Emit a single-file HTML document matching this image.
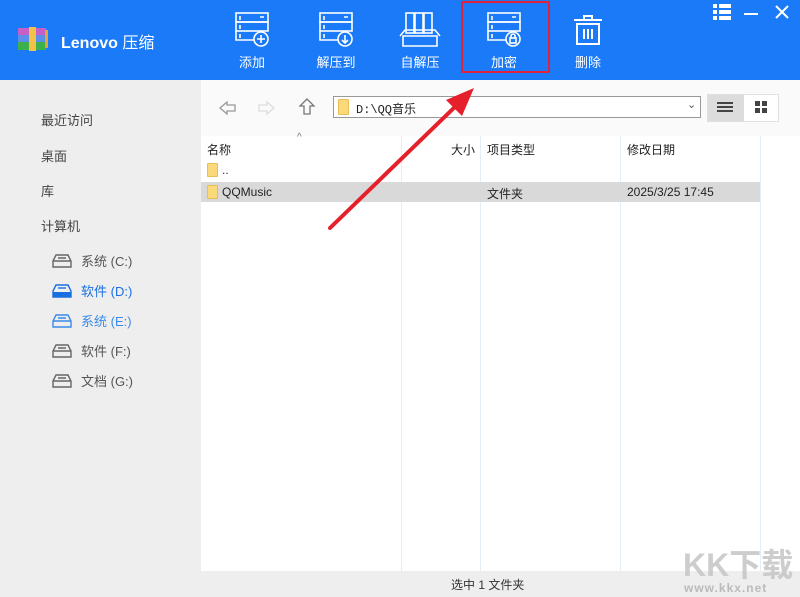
<!DOCTYPE html>
<html><head><meta charset="utf-8"><style>
*{margin:0;padding:0;box-sizing:border-box}
body{width:800px;height:597px;overflow:hidden;font-family:"Liberation Sans","Noto Sans CJK SC",sans-serif;font-size:13px;color:#333;position:relative;background:#fff}
.hdr{position:absolute;left:0;top:0;width:800px;height:80px;background:#1a7af8}
.abs{position:absolute}
.tb{position:absolute;top:10px;width:60px;text-align:center;color:#fff;font-size:13px}
.tb svg{display:block;margin:0 auto 4px}
.side{position:absolute;left:0;top:80px;width:201px;height:517px;background:#eeeeee}
.side div{position:absolute;font-size:13px;color:#444}
.main{position:absolute;left:201px;top:80px;width:599px;height:491px;background:#fff}
.nav{position:absolute;left:201px;top:80px;width:599px;height:56px;background:#fafafa}
.col{position:absolute;top:136px;width:1px;height:435px;background:#e4eef7}
.status{position:absolute;left:201px;top:571px;width:599px;height:26px;background:#eeeeee}
.fold{position:absolute;width:11px;height:14px;background:#fbd97a;border:1px solid #e8be55;border-radius:1px}
</style></head><body>
<div class="hdr"></div>
<svg class="abs" style="left:17px;top:25px" width="32" height="28" viewBox="0 0 32 28">
<rect x="1" y="3" width="28" height="7" fill="#c65fc6"/><rect x="1" y="10" width="28" height="7" fill="#5a8ee8"/><rect x="1" y="17" width="28" height="8" fill="#3cb04a"/>
<rect x="12" y="2" width="7" height="24" fill="#f1c14a"/><rect x="28" y="5" width="3" height="18" fill="#e2a43b"/></svg>
<div class="abs" style="left:61px;top:29px;color:#fff;font-size:16px;font-weight:bold">Lenovo <span style="font-weight:normal">压缩</span></div>
<div class="tb" style="left:222px"><svg width="40" height="38" viewBox="0 0 40 38" fill="none" stroke="#fff" stroke-width="1.6"><rect x="4" y="3" width="32" height="9"/><rect x="4" y="12" width="32" height="9"/><path d="M4 21v9h18"/><path d="M8 6v4M8 15v4M8 24v4M28 7h4"/><circle cx="29" cy="29" r="7" fill="#1a7af8"/><path d="M29 25v8M25 29h8"/></svg>添加</div>
<div class="tb" style="left:306px"><svg width="40" height="38" viewBox="0 0 40 38" fill="none" stroke="#fff" stroke-width="1.6"><rect x="4" y="3" width="32" height="9"/><rect x="4" y="12" width="32" height="9"/><path d="M4 21v9h18"/><path d="M8 6v4M8 15v4M8 24v4M28 7h4"/><circle cx="29" cy="29" r="7" fill="#1a7af8"/><path d="M29 25v8M26 30l3 3 3-3"/></svg>解压到</div>
<div class="tb" style="left:390px"><svg width="44" height="38" viewBox="0 0 44 38" fill="none" stroke="#fff" stroke-width="1.6"><rect x="8" y="3" width="8" height="20"/><rect x="17" y="3" width="8" height="20"/><rect x="26" y="3" width="8" height="20"/><path d="M2 26l5-6h30l5 6M5 26h34v10H5z"/></svg>自解压</div>
<div class="abs" style="left:461px;top:1px;width:89px;height:72px;border:2px solid #e0223a"></div>
<div class="tb" style="left:474px"><svg width="40" height="38" viewBox="0 0 40 38" fill="none" stroke="#fff" stroke-width="1.6"><rect x="4" y="3" width="32" height="9"/><rect x="4" y="12" width="32" height="9"/><path d="M4 21v9h18"/><path d="M8 6v4M8 15v4M8 24v4M28 7h4"/><circle cx="29" cy="29" r="7" fill="#1a7af8"/><rect x="26" y="28" width="6" height="5"/><path d="M27 28v-2a2 2 0 0 1 4 0v2"/></svg>加密</div>
<div class="tb" style="left:558px"><svg width="40" height="38" viewBox="0 0 40 38" fill="none" stroke="#fff" stroke-width="2"><path d="M6 10h28M16 10V6h8v4"/><rect x="9" y="14" width="22" height="20"/><path d="M16 19v10M20 19v10M24 19v10"/></svg>删除</div>
<svg class="abs" style="left:713px;top:4px" width="18" height="16" viewBox="0 0 18 16" fill="#fff"><rect x="0" y="0" width="4" height="4"/><rect x="6" y="0" width="12" height="4"/><rect x="0" y="6" width="4" height="4"/><rect x="6" y="6" width="12" height="4"/><rect x="0" y="12" width="4" height="4"/><rect x="6" y="12" width="12" height="4"/></svg>
<div class="abs" style="left:744px;top:13px;width:14px;height:2px;background:#fff"></div>
<svg class="abs" style="left:775px;top:5px" width="14" height="14" viewBox="0 0 14 14" stroke="#fff" stroke-width="2"><path d="M1 1l12 12M13 1L1 13"/></svg>
<div class="side">
<div style="left:41px;top:30px">最近访问</div>
<div style="left:41px;top:66px">桌面</div>
<div style="left:41px;top:101px">库</div>
<div style="left:41px;top:136px">计算机</div>
<div style="left:81px;top:171px;color:#555">系统 (C:)</div>
<div style="left:81px;top:201px;color:#1a6fe0">软件 (D:)</div>
<div style="left:81px;top:231px;color:#3a8ae6">系统 (E:)</div>
<div style="left:81px;top:261px;color:#555">软件 (F:)</div>
<div style="left:81px;top:291px;color:#555">文档 (G:)</div>
</div>
<svg class="abs" style="left:52px;top:253px" width="20" height="140" viewBox="0 0 20 140" fill="none" stroke-width="1.4">
<g stroke="#666"><path d="M4 2h12l3 6v6H1V8z M1 8h18M6 5h8M6 8h8"/></g>
<g transform="translate(0,30)"><path d="M4 2h12l3 6v6H1V8z" stroke="#1a6fe0" fill="none"/><rect x="1" y="9" width="18" height="5" fill="#1a6fe0"/><path d="M6 5h8" stroke="#1a6fe0"/></g>
<g transform="translate(0,60)" stroke="#3a8ae6"><path d="M4 2h12l3 6v6H1V8z M1 8h18M6 5h8M6 8h8"/></g>
<g transform="translate(0,90)" stroke="#666"><path d="M4 2h12l3 6v6H1V8z M1 8h18M6 5h8M6 8h8"/></g>
<g transform="translate(0,120)" stroke="#666"><path d="M4 2h12l3 6v6H1V8z M1 8h18M6 5h8M6 8h8"/></g>
</svg>
<div class="main"></div>
<div class="nav"></div>
<svg class="abs" style="left:219px;top:100px" width="18" height="16" viewBox="0 0 18 16" fill="none" stroke="#999" stroke-width="1.3"><path d="M1 8l7-6v3h8v6H8v3z"/></svg>
<svg class="abs" style="left:257px;top:100px" width="18" height="16" viewBox="0 0 18 16" fill="none" stroke="#ddd" stroke-width="1.3"><path d="M17 8l-7-6v3H2v6h8v3z"/></svg>
<svg class="abs" style="left:298px;top:98px" width="18" height="18" viewBox="0 0 18 18" fill="none" stroke="#777" stroke-width="1.3"><path d="M9 1l-7 7h4v8h6V8h4z"/></svg>
<div class="abs" style="left:333px;top:96px;width:368px;height:22px;border:1px solid #999;background:#fff"></div>
<div class="fold" style="left:338px;top:99px;height:16px"></div>
<div class="abs" style="left:356px;top:100px;font-size:12px;font-family:'Liberation Mono','Noto Sans CJK SC',monospace;color:#222">D:\QQ音乐</div>
<div class="abs" style="left:687px;top:98px;color:#555;font-size:11px">⌄</div>
<div class="abs" style="left:707px;top:94px;width:72px;height:28px;border:1px solid #e0e0e0;background:#fff"></div>
<div class="abs" style="left:708px;top:95px;width:36px;height:26px;background:#dcdcdc"></div>
<svg class="abs" style="left:717px;top:101px" width="16" height="12" viewBox="0 0 16 12" fill="#444"><rect y="1" width="16" height="2"/><rect y="5" width="16" height="2"/><rect y="9" width="16" height="2"/></svg>
<svg class="abs" style="left:755px;top:101px" width="12" height="12" viewBox="0 0 12 12" fill="#444"><rect width="5" height="5"/><rect x="7" width="5" height="5"/><rect y="7" width="5" height="5"/><rect x="7" y="7" width="5" height="5"/></svg>
<div class="col" style="left:401px"></div><div class="col" style="left:480px"></div><div class="col" style="left:620px"></div><div class="col" style="left:760px"></div>
<div class="abs" style="left:297px;top:132px;color:#777;font-size:10px">^</div>
<div class="abs" style="left:207px;top:141px;font-size:12px;color:#222">名称</div>
<div class="abs" style="left:451px;top:141px;font-size:12px;color:#222">大小</div>
<div class="abs" style="left:487px;top:141px;font-size:12px;color:#222">项目类型</div>
<div class="abs" style="left:627px;top:141px;font-size:12px;color:#222">修改日期</div>
<div class="fold" style="left:207px;top:163px"></div>
<div class="abs" style="left:222px;top:163px;font-size:12px">..</div>
<div class="abs" style="left:201px;top:182px;width:559px;height:20px;background:#d9d9d9"></div>
<div class="fold" style="left:207px;top:185px"></div>
<div class="abs" style="left:222px;top:185px;font-size:12px;color:#222">QQMusic</div>
<div class="abs" style="left:487px;top:185px;font-size:12px;color:#222">文件夹</div>
<div class="abs" style="left:627px;top:185px;font-size:12px;color:#222">2025/3/25 17:45</div>
<svg class="abs" style="left:320px;top:80px" width="160" height="160" viewBox="0 0 160 160"><path d="M10 148L140 22" stroke="#e5202a" stroke-width="4" stroke-linecap="round"/><path d="M154 8L126 20L142 36z" fill="#e5202a"/></svg>
<div class="status"></div>
<div class="abs" style="left:451px;top:576px;font-size:12px;color:#333">选中 1 文件夹</div>
<div class="abs" style="left:683px;top:540px;font-size:32px;font-weight:bold;color:#c8c8c8;opacity:.9">KK下载</div>
<div class="abs" style="left:684px;top:581px;font-size:12px;font-weight:bold;color:#bbb;letter-spacing:1px">www.kkx.net</div>
</body></html>
